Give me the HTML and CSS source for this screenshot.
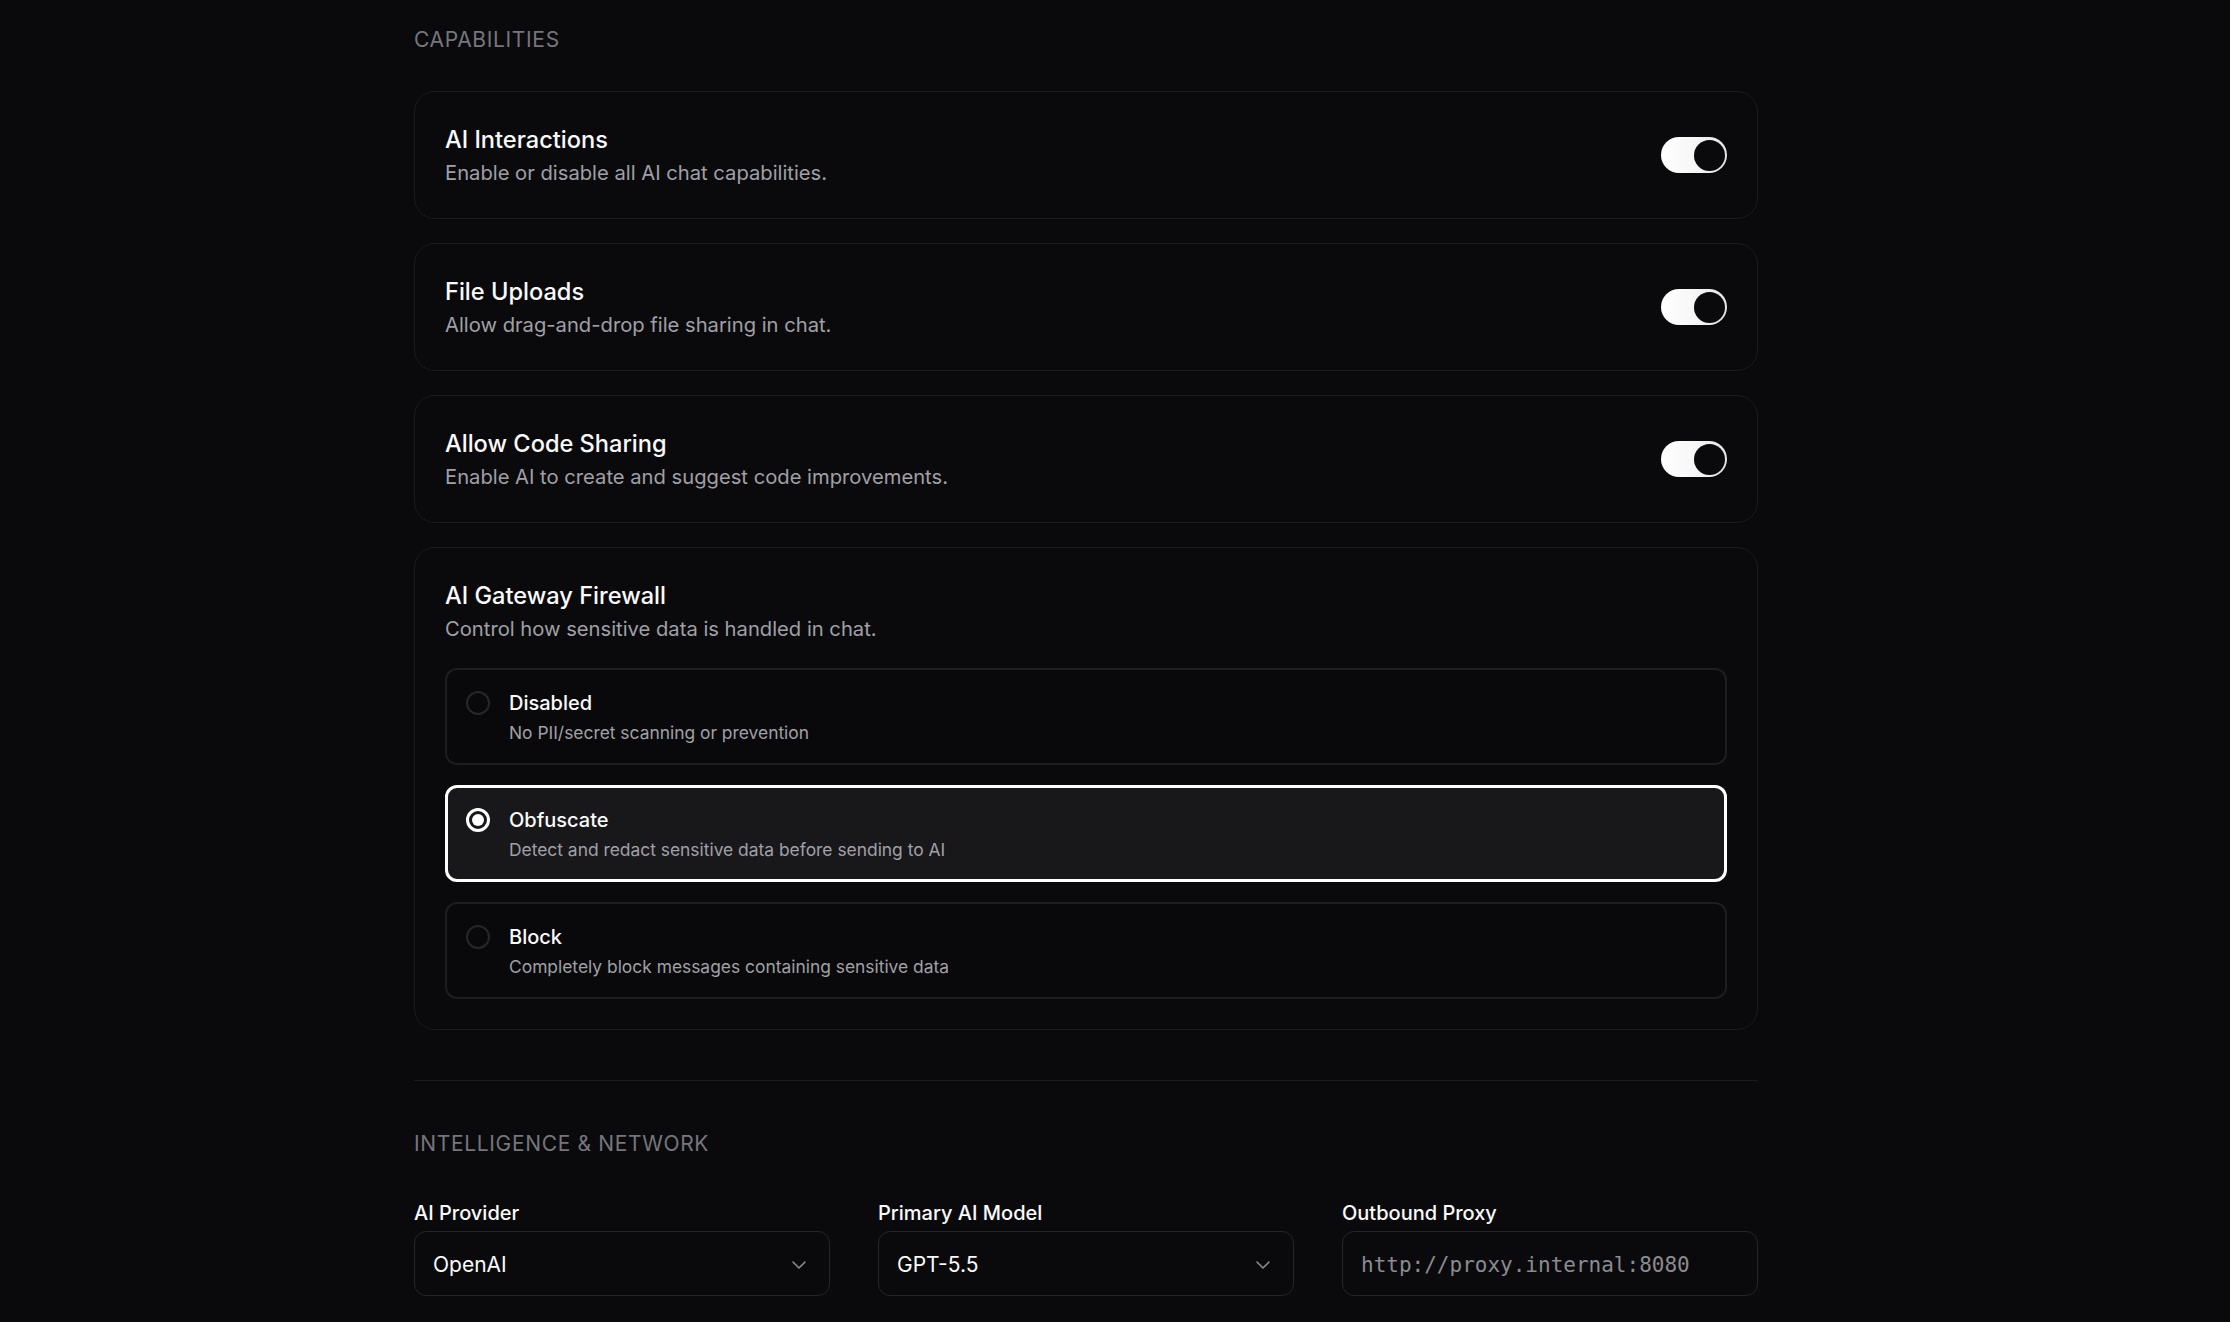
FILE: index.html
```html
<!DOCTYPE html>
<html lang="en">
<head>
<meta charset="utf-8">
<title>Settings</title>
<link rel="stylesheet" href="styles.css">
</head>
<body>
<main class="page">
  <section class="section">
    <h2 class="section-title">Capabilities</h2>
    <div class="card-list">
      <div class="card card-row">
        <div class="card-text">
          <div class="card-title">AI Interactions</div>
          <div class="card-desc">Enable or disable all AI chat capabilities.</div>
        </div>
        <button class="toggle" aria-pressed="true"><span class="knob"></span></button>
      </div>
      <div class="card card-row">
        <div class="card-text">
          <div class="card-title">File Uploads</div>
          <div class="card-desc">Allow drag-and-drop file sharing in chat.</div>
        </div>
        <button class="toggle" aria-pressed="true"><span class="knob"></span></button>
      </div>
      <div class="card card-row">
        <div class="card-text">
          <div class="card-title">Allow Code Sharing</div>
          <div class="card-desc">Enable AI to create and suggest code improvements.</div>
        </div>
        <button class="toggle" aria-pressed="true"><span class="knob"></span></button>
      </div>
      <div class="card">
        <div class="card-title">AI Gateway Firewall</div>
        <div class="card-desc">Control how sensitive data is handled in chat.</div>
        <div class="options">
          <div class="option">
            <span class="radio"></span>
            <div class="option-text">
              <div class="option-title">Disabled</div>
              <div class="option-desc">No PII/secret scanning or prevention</div>
            </div>
          </div>
          <div class="option option-selected">
            <span class="radio radio-on"><span class="dot"></span></span>
            <div class="option-text">
              <div class="option-title">Obfuscate</div>
              <div class="option-desc">Detect and redact sensitive data before sending to AI</div>
            </div>
          </div>
          <div class="option">
            <span class="radio"></span>
            <div class="option-text">
              <div class="option-title">Block</div>
              <div class="option-desc">Completely block messages containing sensitive data</div>
            </div>
          </div>
        </div>
      </div>
    </div>
  </section>

  <section class="section section-divided">
    <h2 class="section-title">Intelligence &amp; Network</h2>
    <div class="fields">
      <div class="field">
        <label class="field-label">AI Provider</label>
        <div class="select">
          <span class="select-value">OpenAI</span>
          <svg class="chevron" width="14" height="8" viewBox="0 0 14 8" fill="none"><path d="M1 1l6 6 6-6" stroke="#8a8a90" stroke-width="1.6" stroke-linecap="round" stroke-linejoin="round"/></svg>
        </div>
      </div>
      <div class="field">
        <label class="field-label">Primary AI Model</label>
        <div class="select">
          <span class="select-value">GPT-5.5</span>
          <svg class="chevron" width="14" height="8" viewBox="0 0 14 8" fill="none"><path d="M1 1l6 6 6-6" stroke="#8a8a90" stroke-width="1.6" stroke-linecap="round" stroke-linejoin="round"/></svg>
        </div>
      </div>
      <div class="field">
        <label class="field-label">Outbound Proxy</label>
        <div class="input">
          <span class="placeholder">http://proxy.internal:8080</span>
        </div>
      </div>
    </div>
  </section>
</main>
</body>
</html>
```

FILE: styles.css
```css
* { box-sizing: border-box; }

html, body {
  margin: 0;
  padding: 0;
  background: #0a0a0c;
  color: #fafafa;
  font-family: Inter, "Noto Sans", "Liberation Sans", sans-serif;
}

.page {
  width: 1344px;
  margin-left: 414px;
  padding-top: 25px;
}

.section-title {
  margin: 0 0 36px 0;
  font-size: 21px;
  line-height: 30px;
  font-weight: 400;
  text-transform: uppercase;
  letter-spacing: 0.65px;
  color: #76767c;
}

.card-list {
  display: flex;
  flex-direction: column;
  gap: 24px;
}

.card {
  border: 1px solid #1b1b1e;
  border-radius: 21px;
  padding: 30px;
  background: #0a0a0c;
}

.card-row {
  display: flex;
  align-items: center;
  justify-content: space-between;
}

.card-title {
  font-size: 23.6px;
  line-height: 36px;
  font-weight: 500;
  color: #fafafa;
}

.card-desc {
  font-size: 20.2px;
  line-height: 30px;
  color: #a0a0a6;
}

.toggle {
  position: relative;
  width: 66px;
  height: 36px;
  border: 0;
  padding: 0;
  border-radius: 18px;
  background: linear-gradient(90deg, #ffffff 0%, #f7f7f7 50%, #e4e4e6 100%);
  flex-shrink: 0;
}

.knob {
  position: absolute;
  top: 2.5px;
  right: 2.5px;
  width: 31px;
  height: 31px;
  border-radius: 50%;
  background: #0a0a0c;
}

.options {
  margin-top: 24px;
  display: flex;
  flex-direction: column;
  gap: 20px;
}

.option {
  display: flex;
  align-items: flex-start;
  gap: 19px;
  border: 2px solid #1e1e21;
  border-radius: 12px;
  padding: 18px 18px 18px 19px;
  background: #09090b;
}

.option-selected {
  border: 3px solid #ffffff;
  padding: 17px 17px 17px 18px;
  background: #18181b;
}

.radio {
  position: relative;
  width: 24px;
  height: 24px;
  margin-top: 3px;
  border-radius: 50%;
  border: 2px solid #27272a;
  flex-shrink: 0;
}

.radio-on {
  border: 3px solid #ffffff;
}

.dot {
  position: absolute;
  top: 3px;
  left: 3px;
  width: 12px;
  height: 12px;
  border-radius: 50%;
  background: #ffffff;
}

.option-title {
  font-size: 20px;
  line-height: 30px;
  font-weight: 500;
  color: #fafafa;
}

.option-desc {
  margin-top: 3px;
  font-size: 17.4px;
  line-height: 24px;
  color: #a0a0a6;
}

.section-divided {
  margin-top: 50px;
  border-top: 1px solid #1b1b1e;
  padding-top: 48px;
}

.section-divided .section-title {
  margin-bottom: 39px;
}

.fields {
  display: grid;
  grid-template-columns: repeat(3, 1fr);
  gap: 48px;
}

.field-label {
  display: block;
  margin-bottom: 3px;
  font-size: 20px;
  line-height: 30px;
  font-weight: 500;
  color: #fafafa;
}

.select, .input {
  height: 65px;
  border: 1px solid #26262a;
  border-radius: 12px;
  display: flex;
  align-items: center;
  padding: 2px 23px 0 18px;
  background: #0a0a0c;
}

.select {
  justify-content: space-between;
}

.select-value {
  font-size: 21px;
  color: #fafafa;
}

.placeholder {
  font-family: "DejaVu Sans Mono", "Liberation Mono", monospace;
  font-size: 21px;
  color: #8b8b90;
}
```
